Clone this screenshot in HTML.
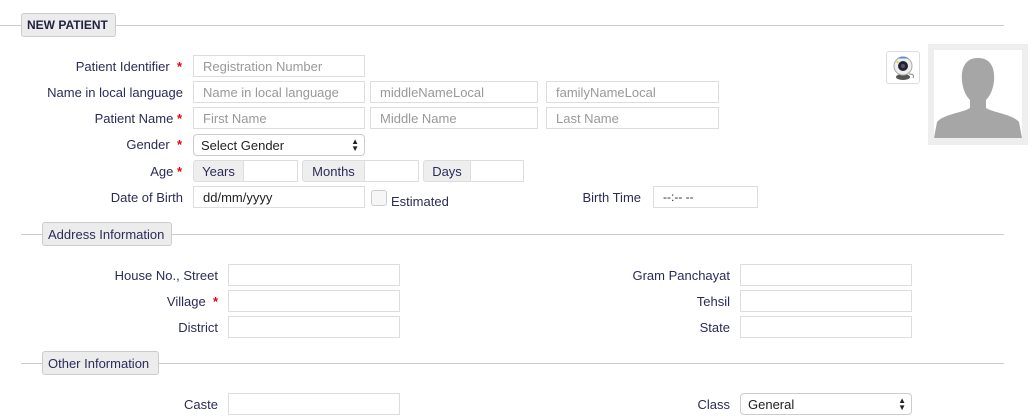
<!DOCTYPE html>
<html><head><meta charset="utf-8"><style>
*{box-sizing:border-box;margin:0;padding:0}
body{width:1033px;height:414px;overflow:hidden;background:#fff;font-family:"Liberation Sans",sans-serif;font-size:13px;color:#2b2b58;position:relative}
.a{position:absolute}
.l{position:absolute;text-align:right;white-space:nowrap;line-height:22px;margin-top:1px}
.i{position:absolute;border:1px solid #ddd;height:22px;background:#fff;color:#999;padding-left:9px;line-height:21px;white-space:nowrap}
.s{color:#e00;font-weight:bold}
.hr{position:absolute;left:0;width:1004px;height:1px;background:#ccc}
.lg{position:absolute;background:#ececec;border:1px solid #ccc;border-radius:3px;height:24px;line-height:23px;padding:0 5px;white-space:nowrap}
.ad{position:absolute;background:#eee;border:1px solid #ddd;height:22px;line-height:21px;text-align:center;border-radius:3px 0 0 3px}
.sel{position:absolute;border:1px solid #ccc;border-radius:4px;height:22px;line-height:21px;padding-left:7px;color:#222;background:#fff}
.ar{position:absolute;right:5px;top:3px;font-size:8px;line-height:7px;color:#222}
</style></head><body>
<div class="hr" style="top:25px"></div>
<div class="lg" style="left:21px;top:13px;width:95px;font-weight:bold;font-size:12px;color:#222244">NEW PATIENT</div>

<div class="l" style="right:851px;top:55px">Patient Identifier&nbsp;&nbsp;<span class="s">*</span></div>
<div class="l" style="right:850px;top:81px">Name in local language</div>
<div class="l" style="right:851px;top:107px">Patient Name <span class="s">*</span></div>
<div class="l" style="right:851px;top:133px">Gender&nbsp;&nbsp;<span class="s">*</span></div>
<div class="l" style="right:851px;top:160px">Age <span class="s">*</span></div>
<div class="l" style="right:850px;top:186px">Date of Birth</div>

<div class="i" style="left:193px;top:55px;width:172px">Registration Number</div>
<div class="i" style="left:193px;top:81px;width:172px">Name in local language</div>
<div class="i" style="left:370px;top:81px;width:168px">middleNameLocal</div>
<div class="i" style="left:546px;top:81px;width:173px">familyNameLocal</div>
<div class="i" style="left:193px;top:107px;width:172px">First Name</div>
<div class="i" style="left:370px;top:107px;width:168px">Middle Name</div>
<div class="i" style="left:546px;top:107px;width:173px">Last Name</div>
<div class="sel" style="left:193px;top:134px;width:172px">Select Gender<div class="ar">▲<br>▼</div></div>

<div class="ad" style="left:193px;top:160px;width:51px">Years</div>
<div class="i" style="left:243px;top:160px;width:55px"></div>
<div class="ad" style="left:302px;top:160px;width:63px">Months</div>
<div class="i" style="left:364px;top:160px;width:55px"></div>
<div class="ad" style="left:423px;top:160px;width:48px">Days</div>
<div class="i" style="left:470px;top:160px;width:54px"></div>

<div class="i" style="left:193px;top:186px;width:172px;color:#222">dd/mm/yyyy</div>
<div class="a" style="left:371px;top:190px;width:16px;height:16px;border:1px solid #ccc;border-radius:3px;background:#f6f6f6"></div>
<div class="a" style="left:391px;top:194px">Estimated</div>
<div class="l" style="right:392px;top:186px">Birth Time</div>
<div class="i" style="left:653px;top:186px;width:105px;color:#333;font-size:12px">--:-- --</div>

<div class="a" style="left:886px;top:51px;width:34px;height:33px;border:1px solid #ddd;border-radius:3px;background:#fff">
<svg width="32" height="31" viewBox="0 0 32 31"><ellipse cx="16" cy="25" rx="7" ry="3" fill="#555"/><path d="M22 22 q6 0 4 4" stroke="#888" fill="none"/><circle cx="16" cy="14" r="9" fill="#eee" stroke="#aaa"/><path d="M10 6.5 q6-4 12 0" fill="#5b8fd0"/><circle cx="16" cy="14" r="5" fill="#223"/><circle cx="16" cy="14" r="2" fill="#556"/><circle cx="10.5" cy="10" r="1.2" fill="#dd3"/></svg></div>
<div class="a" style="left:928px;top:44px;width:100px;height:101px;background:#eee;padding:6px">
<div style="width:88px;height:88px;background:#fff;position:relative;overflow:hidden">
<svg width="88" height="88" viewBox="0 0 88 88" style="position:absolute;left:0;top:0"><path d="M44 8 c-14 0 -17 12 -16 23 c1 9 4 15 8 19 l0 8 c-8 5 -26 6 -33 14 l-3 16 l88 0 l-3-16 c-7 -8 -25 -9 -33 -14 l0-8 c4-4 7-10 8-19 c1-11 -2-23 -16-23z" fill="#a6a6a6"/></svg></div></div>

<div class="hr" style="top:234px;left:21px;width:983px"></div>
<div class="lg" style="left:42px;top:222px;width:130px">Address Information</div>
<div class="l" style="right:815px;top:264px">House No., Street</div>
<div class="l" style="right:815px;top:290px">Village&nbsp;&nbsp;<span class="s">*</span></div>
<div class="l" style="right:815px;top:316px">District</div>
<div class="i" style="left:228px;top:264px;width:172px"></div>
<div class="i" style="left:228px;top:290px;width:172px"></div>
<div class="i" style="left:228px;top:316px;width:172px"></div>
<div class="l" style="right:303px;top:264px">Gram Panchayat</div>
<div class="l" style="right:303px;top:290px">Tehsil</div>
<div class="l" style="right:303px;top:316px">State</div>
<div class="i" style="left:740px;top:264px;width:172px"></div>
<div class="i" style="left:740px;top:290px;width:172px"></div>
<div class="i" style="left:740px;top:316px;width:172px"></div>

<div class="hr" style="top:363px;left:21px;width:983px"></div>
<div class="lg" style="left:42px;top:351px;width:117px">Other Information</div>
<div class="l" style="right:815px;top:393px">Caste</div>
<div class="i" style="left:228px;top:393px;width:172px"></div>
<div class="l" style="right:303px;top:393px">Class</div>
<div class="sel" style="left:740px;top:393px;width:172px">General<div class="ar">▲<br>▼</div></div>
</body></html>
